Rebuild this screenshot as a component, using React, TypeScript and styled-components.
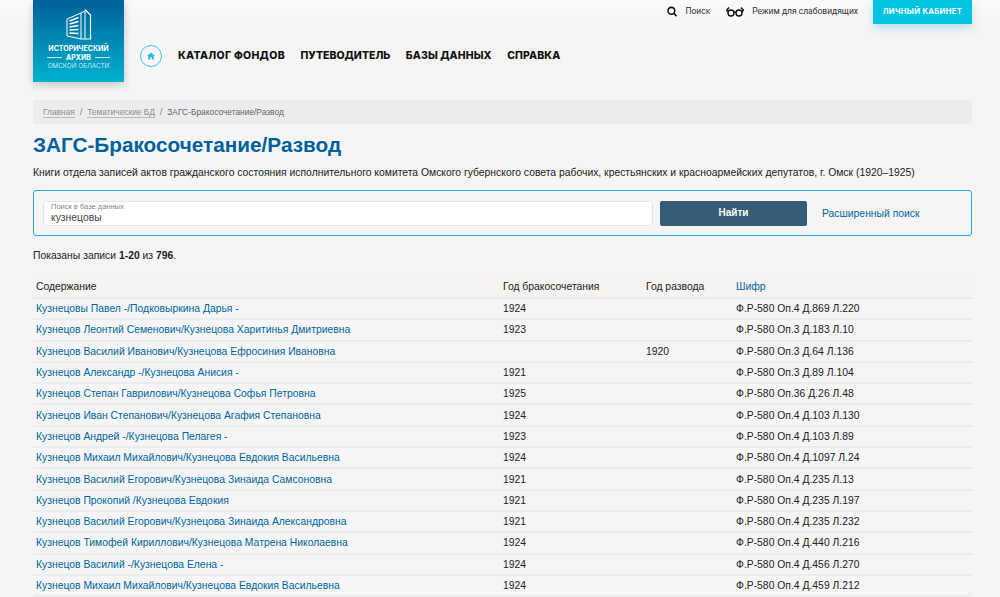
import React from "react";
import styled, { createGlobalStyle } from "styled-components";

const GlobalStyle = createGlobalStyle`
  html, body {
    margin: 0;
    padding: 0;
    background: #f5f5f5;
    height: 597px;
    overflow: hidden;
  }
  body {
    font-family: "Liberation Sans", Arial, sans-serif;
    color: #222;
  }
`;

const Page = styled.div`
  width: 1000px;
  height: 597px;
  overflow: hidden;
  background: linear-gradient(#fafafa 0, #f5f5f5 30px);
`;

const Header = styled.header`
  display: flex;
  height: 100px;
  padding: 0 28px 0 33px;
`;

const LogoBox = styled.a`
  width: 91px;
  height: 82px;
  flex: none;
  display: flex;
  flex-direction: column;
  align-items: center;
  background: linear-gradient(#00609a, #00b2ce);
  box-shadow: 0 3px 8px rgba(0, 0, 0, 0.2);
  color: #fff;
  padding-top: 8px;
  box-sizing: border-box;
`;

const LogoTitle = styled.span`
  font: 700 7px/8px "Inter", sans-serif;
  margin-top: 5px;
  white-space: nowrap;
`;

const LogoMiddle = styled.span`
  display: flex;
  align-items: center;
  gap: 4px;
  font: 700 7px/9px "Inter", sans-serif;

  &::before,
  &::after {
    content: "";
    width: 15px;
    height: 1px;
    background: #bfe6f0;
  }
`;

const LogoSub = styled.span`
  font: 400 6.3px/9px "Inter", sans-serif;
  color: #cdeef5;
  white-space: nowrap;
`;

const HeaderMain = styled.div`
  flex: 1;
  display: flex;
  flex-direction: column;
`;

const TopBar = styled.div`
  display: flex;
  justify-content: flex-end;
  align-items: flex-start;
  height: 45px;
`;

const TopLink = styled.a<{ $mr: number }>`
  display: flex;
  align-items: center;
  gap: 8px;
  height: 23px;
  margin-right: ${(p) => p.$mr}px;
  font: 400 8.5px/1 "Roboto", sans-serif;
  color: #333;
`;

const Cabinet = styled.a`
  width: 99px;
  height: 24px;
  display: flex;
  align-items: center;
  justify-content: center;
  background: #00c4e0;
  color: #fff;
  font: 700 7.7px/1 "Inter", sans-serif;
  letter-spacing: 0.3px;
  box-shadow: 0 4px 10px rgba(0, 160, 200, 0.25);
`;

const Nav = styled.nav`
  display: flex;
  align-items: center;
  padding-left: 16px;
`;

const HomeButton = styled.a`
  width: 20px;
  height: 20px;
  border: 1px solid #45c6e8;
  border-radius: 50%;
  display: flex;
  align-items: center;
  justify-content: center;
  margin-right: 16px;
`;

const NavItem = styled.a<{ $track: number }>`
  font: 800 10.5px/1 "Inter", sans-serif;
  letter-spacing: ${(p) => p.$track}px;
  color: #111;
  margin-right: 15.5px;
  white-space: nowrap;
`;

const Main = styled.main`
  padding: 0 28px 0 33px;
`;

const Breadcrumbs = styled.div`
  height: 24px;
  background: #e9edf0;
  display: flex;
  align-items: center;
  padding-left: 10px;
  font-size: 8.4px;
  color: #666;
`;

const Crumb = styled.a`
  color: #8a8f94;
  border-bottom: 1px solid #b5babe;
  line-height: 10px;
`;

const Slash = styled.span`
  margin: 0 5px;
  color: #777;
`;

const Title = styled.h1`
  margin: 8px 0 0;
  font-size: 20.75px;
  line-height: 25px;
  font-weight: 700;
  color: #00609a;
`;

const Lead = styled.p`
  margin: 9px 0 0;
  font-size: 10.36px;
  line-height: 14px;
  color: #222;
  white-space: nowrap;
`;

const SearchPanel = styled.form`
  margin-top: 10px;
  height: 46px;
  box-sizing: border-box;
  border: 1px solid #2ea6e6;
  border-radius: 3px;
  display: flex;
  align-items: center;
  padding: 0 9px;
`;

const SearchField = styled.div`
  width: 610px;
  height: 25px;
  box-sizing: border-box;
  background: #fff;
  border: 1px solid #e3e6e8;
  border-radius: 3px;
  padding: 1px 7px 0;
  display: flex;
  flex-direction: column;
`;

const FieldLabel = styled.span`
  font-size: 7.5px;
  line-height: 8px;
  color: #888;
`;

const FieldValue = styled.span`
  font-size: 10.36px;
  line-height: 14px;
  color: #444;
`;

const FindButton = styled.button`
  width: 147px;
  height: 25px;
  margin-left: 7px;
  border: 0;
  border-radius: 2px;
  background: #355d75;
  color: #fff;
  font: 700 10px/1 "Liberation Sans", sans-serif;
`;

const AdvancedLink = styled.a`
  margin-left: 15px;
  font-size: 10.36px;
  color: #00659c;
`;

const Shown = styled.p`
  margin: 13px 0 0;
  font-size: 10.36px;
  line-height: 13px;
  color: #222;
`;

const Table = styled.table`
  width: 100%;
  margin-top: 14px;
  border-collapse: collapse;
  table-layout: fixed;
  font-size: 10.36px;
`;

const HeadCell = styled.th<{ $width?: number }>`
  box-sizing: border-box;
  width: ${(p) => (p.$width ? `${p.$width}px` : "auto")};
  height: 22px;
  padding: 0 3px;
  background: #f7f3f0;
  border-bottom: 2px solid #e9eaec;
  text-align: left;
  font-weight: 400;
  color: #222;
`;

const HeadLink = styled.a`
  color: #00659c;
`;

const Cell = styled.td`
  height: 19.3px;
  padding: 0 3px;
  border-bottom: 2px solid #ebecee;
  color: #222;
  white-space: nowrap;
`;

const RowLink = styled.a`
  color: #00659c;
`;

const rows = [
  ["Кузнецовы Павел -/Подковыркина Дарья -", "1924", "", "Ф.Р-580 Оп.4 Д.869 Л.220"],
  ["Кузнецов Леонтий Семенович/Кузнецова Харитинья Дмитриевна", "1923", "", "Ф.Р-580 Оп.3 Д.183 Л.10"],
  ["Кузнецов Василий Иванович/Кузнецова Ефросиния Ивановна", "", "1920", "Ф.Р-580 Оп.3 Д.64 Л.136"],
  ["Кузнецов Александр -/Кузнецова Анисия -", "1921", "", "Ф.Р-580 Оп.3 Д.89 Л.104"],
  ["Кузнецов Степан Гаврилович/Кузнецова Софья Петровна", "1925", "", "Ф.Р-580 Оп.36 Д.26 Л.48"],
  ["Кузнецов Иван Степанович/Кузнецова Агафия Степановна", "1924", "", "Ф.Р-580 Оп.4 Д.103 Л.130"],
  ["Кузнецов Андрей -/Кузнецова Пелагея -", "1923", "", "Ф.Р-580 Оп.4 Д.103 Л.89"],
  ["Кузнецов Михаил Михайлович/Кузнецова Евдокия Васильевна", "1924", "", "Ф.Р-580 Оп.4 Д.1097 Л.24"],
  ["Кузнецов Василий Егорович/Кузнецова Зинаида Самсоновна", "1921", "", "Ф.Р-580 Оп.4 Д.235 Л.13"],
  ["Кузнецов Прокопий /Кузнецова Евдокия", "1921", "", "Ф.Р-580 Оп.4 Д.235 Л.197"],
  ["Кузнецов Василий Егорович/Кузнецова Зинаида Александровна", "1921", "", "Ф.Р-580 Оп.4 Д.235 Л.232"],
  ["Кузнецов Тимофей Кириллович/Кузнецова Матрена Николаевна", "1924", "", "Ф.Р-580 Оп.4 Д.440 Л.216"],
  ["Кузнецов Василий -/Кузнецова Елена -", "1924", "", "Ф.Р-580 Оп.4 Д.456 Л.270"],
  ["Кузнецов Михаил Михайлович/Кузнецова Евдокия Васильевна", "1924", "", "Ф.Р-580 Оп.4 Д.459 Л.212"],
];

const BuildingIcon = () => (
  <svg width="26" height="32" viewBox="0 0 26 32" fill="none" stroke="#fff">
    <path d="M1 11 L15 5 V31 L1 28 Z" strokeWidth="1" />
    <path d="M3.5 13 L12.5 9.5 M3.5 16 L12.5 13.5 M3.5 19 L12.5 17.5 M3.5 22 L12.5 21.5 M3.5 25 L12.5 25.5" strokeWidth="1.5" />
    <path d="M15 5 L19 3 V31 H15" strokeWidth="1" />
    <path d="M19 1.5 L24.5 7 V31 H19" strokeWidth="1.2" />
  </svg>
);

const SearchIcon = () => (
  <svg width="10" height="11" viewBox="0 0 10 11" fill="none" stroke="#111" strokeWidth="1.6">
    <circle cx="4.4" cy="4.8" r="3.4" />
    <path d="M6.9 7.4 L9.6 10.2" />
  </svg>
);

const GlassesIcon = () => (
  <svg width="18" height="11" viewBox="0 0 18 11" fill="none" stroke="#111" strokeWidth="1.4">
    <circle cx="5" cy="7" r="3" />
    <circle cx="13" cy="7" r="3" />
    <path d="M8 6.5 Q9 5.6 10 6.5 M2 6 L0.6 4.2 L3 1.5 M16 6 L17.4 4.2 L15 1.5" />
  </svg>
);

const HomeIcon = () => (
  <svg width="8" height="8" viewBox="0 0 8 8" fill="#2bb8e0">
    <path d="M4 0.5 L8 4 H6.8 V7.5 H4.8 V5.2 H3.2 V7.5 H1.2 V4 H0 Z" />
  </svg>
);

export default function App() {
  return (
    <Page>
      <GlobalStyle />
      <Header>
        <LogoBox>
          <BuildingIcon />
          <LogoTitle>ИСТОРИЧЕСКИЙ</LogoTitle>
          <LogoMiddle>АРХИВ</LogoMiddle>
          <LogoSub>ОМСКОЙ ОБЛАСТИ</LogoSub>
        </LogoBox>
        <HeaderMain>
          <TopBar>
            <TopLink $mr={16}>
              <SearchIcon />
              Поиск
            </TopLink>
            <TopLink $mr={15}>
              <GlassesIcon />
              Режим для слабовидящих
            </TopLink>
            <Cabinet>ЛИЧНЫЙ КАБИНЕТ</Cabinet>
          </TopBar>
          <Nav>
            <HomeButton>
              <HomeIcon />
            </HomeButton>
            <NavItem $track={0.3}>КАТАЛОГ ФОНДОВ</NavItem>
            <NavItem $track={0}>ПУТЕВОДИТЕЛЬ</NavItem>
            <NavItem $track={0.1}>БАЗЫ ДАННЫХ</NavItem>
            <NavItem $track={0.1}>СПРАВКА</NavItem>
          </Nav>
        </HeaderMain>
      </Header>
      <Main>
        <Breadcrumbs>
          <Crumb>Главная</Crumb>
          <Slash>/</Slash>
          <Crumb>Тематические БД</Crumb>
          <Slash>/</Slash>
          ЗАГС-Бракосочетание/Развод
        </Breadcrumbs>
        <Title>ЗАГС-Бракосочетание/Развод</Title>
        <Lead>
          Книги отдела записей актов гражданского состояния исполнительного комитета Омского губернского совета
          рабочих, крестьянских и красноармейских депутатов, г. Омск (1920–1925)
        </Lead>
        <SearchPanel>
          <SearchField>
            <FieldLabel>Поиск в базе данных</FieldLabel>
            <FieldValue>кузнецовы</FieldValue>
          </SearchField>
          <FindButton type="button">Найти</FindButton>
          <AdvancedLink>Расширенный поиск</AdvancedLink>
        </SearchPanel>
        <Shown>
          Показаны записи <b>1-20</b> из <b>796</b>.
        </Shown>
        <Table>
          <thead>
            <tr>
              <HeadCell $width={467}>Содержание</HeadCell>
              <HeadCell $width={143}>Год бракосочетания</HeadCell>
              <HeadCell $width={90}>Год развода</HeadCell>
              <HeadCell>
                <HeadLink>Шифр</HeadLink>
              </HeadCell>
            </tr>
          </thead>
          <tbody>
            {rows.map((r) => (
              <tr key={r[3]}>
                <Cell>
                  <RowLink>{r[0]}</RowLink>
                </Cell>
                <Cell>{r[1]}</Cell>
                <Cell>{r[2]}</Cell>
                <Cell>{r[3]}</Cell>
              </tr>
            ))}
          </tbody>
        </Table>
      </Main>
    </Page>
  );
}
